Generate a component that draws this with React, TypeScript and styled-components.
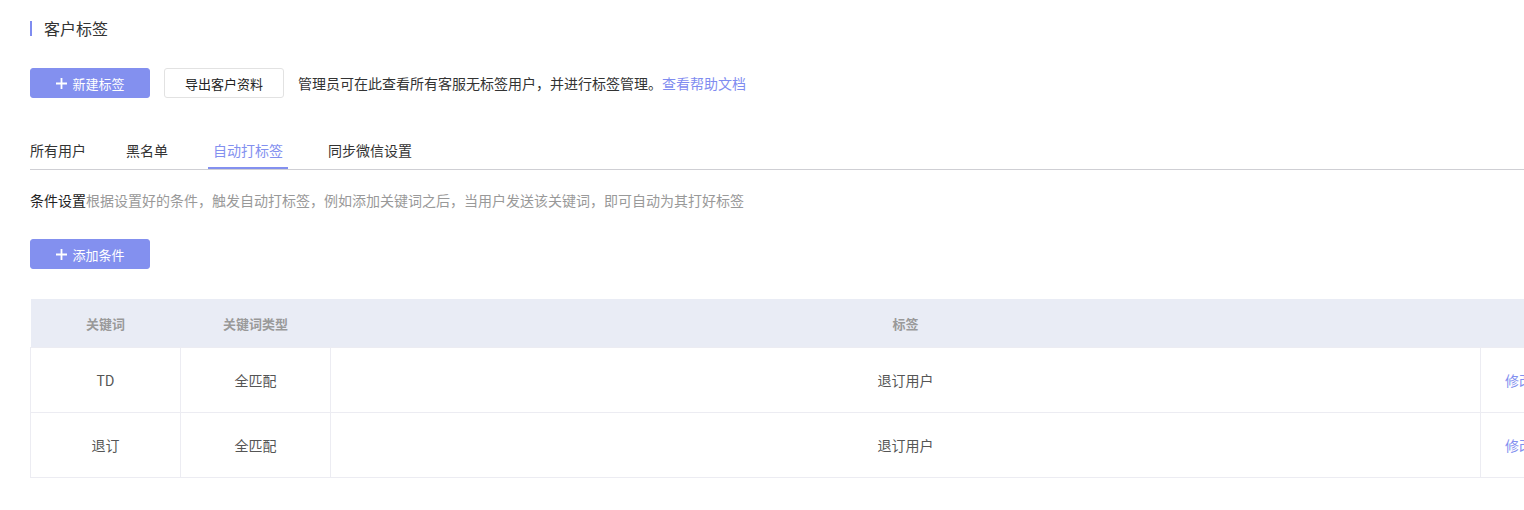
import React, { useState } from 'react'
import styled, { createGlobalStyle } from 'styled-components'

const GlobalStyle = createGlobalStyle`
  html, body {
    margin: 0;
    padding: 0;
    background: #ffffff;
    overflow: hidden;
  }
  body {
    font-family: "Microsoft YaHei", "Noto Sans CJK SC", "Liberation Sans", sans-serif;
    color: #333333;
  }
`

const Page = styled.div`
  padding: 18px 0 0 30px;
  width: 1640px;
  box-sizing: border-box;
`

const Title = styled.div`
  display: flex;
  align-items: center;
  height: 20px;
  font-size: 16px;
  color: #333;
  &::before {
    content: '';
    width: 2px;
    height: 15px;
    background: #7f8cf0;
    margin-right: 12px;
  }
`

const ToolBar = styled.div`
  display: flex;
  align-items: center;
  gap: 14px;
  margin-top: 30px;
  font-size: 14px;
`

const Button = styled.button<{ primary?: boolean }>`
  display: inline-flex;
  align-items: center;
  justify-content: center;
  gap: 4px;
  width: 120px;
  height: 30px;
  border-radius: 3px;
  font-family: inherit;
  font-size: 13px;
  cursor: pointer;
  border: 1px solid ${p => (p.primary ? '#8390ef' : '#e2e2e2')};
  background: ${p => (p.primary ? '#8390ef' : '#ffffff')};
  color: ${p => (p.primary ? '#ffffff' : '#222')};
  padding: 0;
`

const Hint = styled.span`
  color: #333;
`

const Link = styled.a`
  color: #7f8cf0;
  text-decoration: none;
`

const Tabs = styled.div`
  display: flex;
  margin-top: 33px;
  height: 38px;
  border-bottom: 1px solid #cfcfd4;
`

const Tab = styled.div<{ active?: boolean }>`
  position: relative;
  box-sizing: border-box;
  height: 38px;
  padding: 9px ${p => (p.active ? '5px' : '0')} 0;
  margin-right: 40px;
  font-size: 14px;
  line-height: 20px;
  color: ${p => (p.active ? '#8390ef' : '#333')};
  cursor: pointer;
  &::after {
    content: '';
    display: ${p => (p.active ? 'block' : 'none')};
    position: absolute;
    left: 0;
    right: 0;
    bottom: 0;
    height: 2px;
    background: #8390ef;
  }
`

const Desc = styled.div`
  margin-top: 20px;
  font-size: 14px;
  line-height: 20px;
  color: #999;
`

const DescLabel = styled.span`
  color: #222;
`

const AddRow = styled.div`
  margin-top: 29px;
  height: 30px;
  display: flex;
`

const Table = styled.table`
  margin-top: 30px;
  border-collapse: collapse;
  font-size: 14px;
  table-layout: fixed;
  width: 1600px;
`

const Th = styled.th<{ w?: number }>`
  width: ${p => (p.w ? `${p.w}px` : 'auto')};
  height: 48px;
  background: #e9ecf5;
  color: #999;
  font-weight: bold;
  font-size: 13px;
  text-align: center;
  padding: 0;
`

const Td = styled.td`
  height: 64px;
  border: 1px solid #ececf2;
  color: #555;
  text-align: center;
  padding: 0;
`

const ActionTd = styled(Td)`
  text-align: left;
  padding-left: 24px;
  color: #8390ef;
`

const Plus = () => (
  <svg width="13" height="13" viewBox="0 0 13 13">
    <path d="M6.5 1v11M1 6.5h11" stroke="#fff" strokeWidth="1.8" />
  </svg>
)

const rows = [
  { key: 'TD', type: '全匹配', tag: '退订用户' },
  { key: '退订', type: '全匹配', tag: '退订用户' },
]

const tabs = ['所有用户', '黑名单', '自动打标签', '同步微信设置']

export default function App() {
  const [active, setActive] = useState(2)
  return (
    <>
      <GlobalStyle />
      <Page>
        <Title>客户标签</Title>
        <ToolBar>
          <Button primary>
            <Plus />
            新建标签
          </Button>
          <Button>导出客户资料</Button>
          <Hint>
            管理员可在此查看所有客服无标签用户，并进行标签管理。<Link href="#">查看帮助文档</Link>
          </Hint>
        </ToolBar>
        <Tabs>
          {tabs.map((t, i) => (
            <Tab key={t} active={i === active} onClick={() => setActive(i)}>
              {t}
            </Tab>
          ))}
        </Tabs>
        <Desc>
          <DescLabel>条件设置</DescLabel>根据设置好的条件，触发自动打标签，例如添加关键词之后，当用户发送该关键词，即可自动为其打好标签
        </Desc>
        <AddRow>
          <Button primary>
            <Plus />
            添加条件
          </Button>
        </AddRow>
        <Table>
          <thead>
            <tr>
              <Th w={150}>关键词</Th>
              <Th w={150}>关键词类型</Th>
              <Th w={1150}>标签</Th>
              <Th>操作</Th>
            </tr>
          </thead>
          <tbody>
            {rows.map(r => (
              <tr key={r.key}>
                <Td>{r.key}</Td>
                <Td>{r.type}</Td>
                <Td>{r.tag}</Td>
                <ActionTd>修改</ActionTd>
              </tr>
            ))}
          </tbody>
        </Table>
      </Page>
    </>
  )
}
